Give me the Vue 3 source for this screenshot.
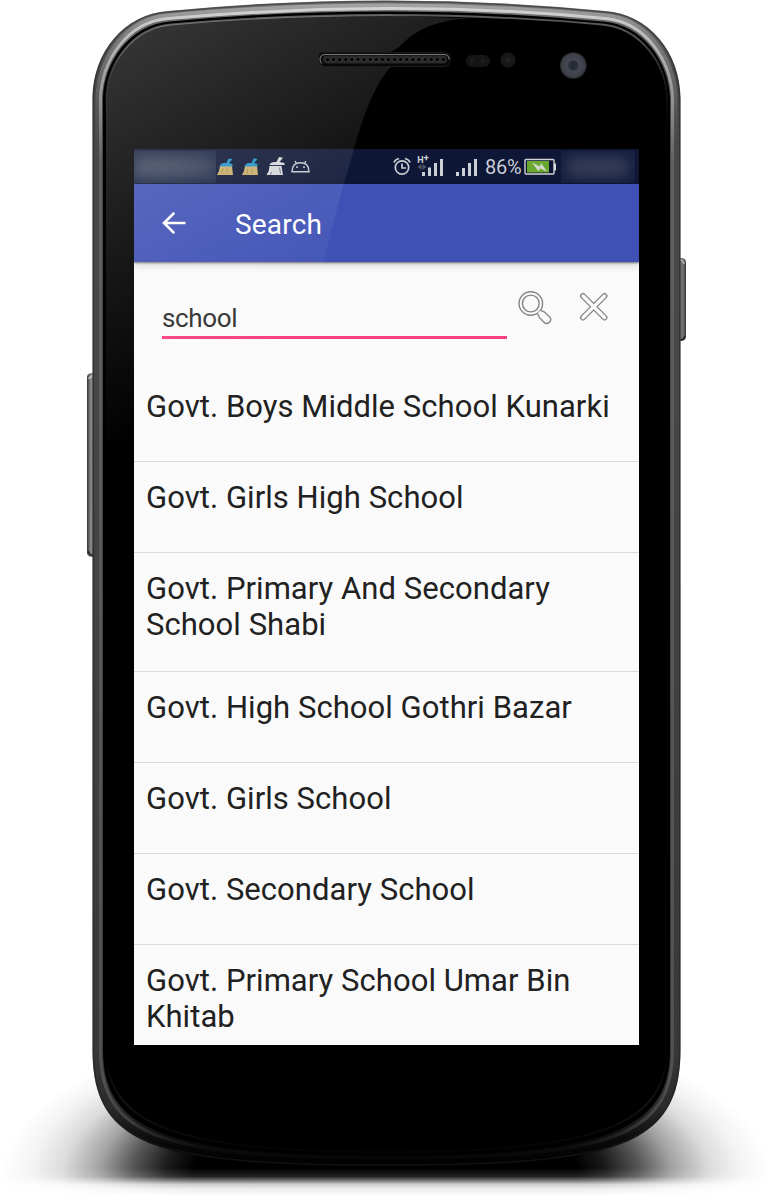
<script setup>
import { ref } from 'vue'

const query = ref('school')
const results = [
  'Govt. Boys Middle School Kunarki',
  'Govt. Girls High School',
  'Govt. Primary And Secondary School Shabi',
  'Govt. High School Gothri Bazar',
  'Govt. Girls School',
  'Govt. Secondary School',
  'Govt. Primary School Umar Bin Khitab',
]
const speakerHoles = Array.from({ length: 20 }, (_, i) => 327.5 + i * 6.1)
</script>

<template>
  <main class="stage">
    <svg class="layer" viewBox="0 0 771 1196" aria-hidden="true">
      <defs>
        <radialGradient id="shadow" gradientUnits="userSpaceOnUse" cx="0" cy="0" r="1" gradientTransform="translate(386 1176) scale(385 160)">
          <stop offset="0" stop-color="#000" />
          <stop offset=".5" stop-color="#000" />
          <stop offset=".57" stop-color="#000" stop-opacity=".9" />
          <stop offset=".66" stop-color="#000" stop-opacity=".66" />
          <stop offset=".745" stop-color="#000" stop-opacity=".36" />
          <stop offset=".84" stop-color="#000" stop-opacity=".14" />
          <stop offset=".92" stop-color="#000" stop-opacity=".045" />
          <stop offset="1" stop-color="#000" stop-opacity="0" />
        </radialGradient>
        <linearGradient id="floor" gradientUnits="userSpaceOnUse" x1="0" y1="1168" x2="0" y2="1196">
          <stop offset="0" stop-color="#fff" />
          <stop offset=".3" stop-color="#ddd" />
          <stop offset=".45" stop-color="#888" />
          <stop offset=".58" stop-color="#333" />
          <stop offset=".75" stop-color="#111" />
          <stop offset="1" stop-color="#000" />
        </linearGradient>
        <mask id="floorMask" maskUnits="userSpaceOnUse" x="0" y="1000" width="771" height="196">
          <rect y="1000" width="771" height="196" fill="url(#floor)" />
        </mask>
        <linearGradient id="rim" x1="0" y1="0" x2="0" y2="1">
          <stop offset="0" stop-color="#777" />
          <stop offset=".06" stop-color="#484848" />
          <stop offset=".3" stop-color="#484848" />
          <stop offset=".9" stop-color="#383838" />
          <stop offset=".95" stop-color="#2a2a2a" />
          <stop offset=".98" stop-color="#070808" />
          <stop offset="1" stop-color="#000" />
        </linearGradient>
        <linearGradient id="bevel" gradientUnits="userSpaceOnUse" x1="0" y1="0" x2="0" y2="150">
          <stop offset="0" stop-color="#a8a8a8" />
          <stop offset=".25" stop-color="#7c7c7c" />
          <stop offset=".6" stop-color="#606060" />
          <stop offset="1" stop-color="#555" stop-opacity="0" />
        </linearGradient>
        <linearGradient id="shine" gradientUnits="userSpaceOnUse" x1="0" y1="0" x2="0" y2="1166">
          <stop offset="0" stop-color="#d8d8d8" />
          <stop offset=".04" stop-color="#b4b4b4" />
          <stop offset=".09" stop-color="#909090" />
          <stop offset=".14" stop-color="#606060" />
          <stop offset=".93" stop-color="#505050" />
          <stop offset=".96" stop-color="#404040" />
          <stop offset=".975" stop-color="#202020" />
          <stop offset=".985" stop-color="#0b0c0c" />
          <stop offset="1" stop-color="#030303" />
        </linearGradient>
        <linearGradient id="inner" gradientUnits="userSpaceOnUse" x1="0" y1="10" x2="0" y2="1160">
          <stop offset="0" stop-color="#606060" />
          <stop offset=".025" stop-color="#4c4c4c" />
          <stop offset=".07" stop-color="#111" />
          <stop offset=".1" stop-color="#000" />
          <stop offset=".91" stop-color="#000" />
          <stop offset=".95" stop-color="#161616" />
          <stop offset=".985" stop-color="#060606" />
          <stop offset="1" stop-color="#030303" />
        </linearGradient>
        <linearGradient id="key" x1="0" y1="0" x2="1" y2="0">
          <stop offset="0" stop-color="#333" />
          <stop offset=".3" stop-color="#888" />
          <stop offset="1" stop-color="#707070" />
        </linearGradient>
        <linearGradient id="keyRight" x1="1" y1="0" x2="0" y2="0">
          <stop offset="0" stop-color="#333" />
          <stop offset=".25" stop-color="#707070" />
          <stop offset="1" stop-color="#666" />
        </linearGradient>
        <radialGradient id="lens">
          <stop offset="0" stop-color="#252b33" />
          <stop offset=".33" stop-color="#2b3038" />
          <stop offset=".42" stop-color="#454852" />
          <stop offset=".85" stop-color="#3e4049" />
          <stop offset="1" stop-color="#25262b" />
        </radialGradient>
      </defs>

      <!-- floor shadow -->
      <rect y="1000" width="771" height="196" fill="url(#shadow)" mask="url(#floorMask)" />

      <!-- side keys -->
      <rect x="87" y="373" width="12" height="184" rx="4.5" fill="url(#key)" />
      <path d="M89 379q1-3 5-3" fill="none" stroke="#bbb" stroke-width="2" />
      <path d="M88 551q1 4 6 5" fill="none" stroke="#222" stroke-width="1.5" />
      <rect x="675" y="258" width="11" height="83" rx="4.5" fill="url(#keyRight)" />
      <path d="M680 260q3 0 4 4" fill="none" stroke="#aaa" stroke-width="2" />
      <path d="M680 340q4 0 5-4" fill="none" stroke="#222" stroke-width="1.5" />

      <!-- body -->
      <path d="M92.500 98C93 52 124 14 168 11Q276 .5 386.500 .5T605 11C649 14 680 52 680.500 98V1050C680.500 1148 615 1166 386.500 1166S92.500 1148 92.500 1050Z" fill="url(#rim)" />
      <path d="M93.300 98C94 53 125 15 168 12Q276 1.500 386.500 1.500T605 12C648 15 679 53 679.700 98V1050C679.700 1147 614 1165 386.500 1165S93.300 1147 93.300 1050Z" fill="none" stroke="#222" stroke-opacity=".5" stroke-width="1.500" />
      <path d="M98.500 98C100 59 126 20 168 16.500Q276 6.500 386.500 6.500T605 16.500C647 20 673 59 674.500 98V150M98.500 98V150" fill="none" stroke="url(#bevel)" stroke-width="6" />
      <path d="M100.500 98C102 61 127 22 168 18.500Q276 9 386.500 8.500T605 18.500C646 22 671 61 672.500 98V1050C672.500 1136 612 1158 386.500 1158S100.500 1136 100.500 1050Z" fill="none" stroke="url(#shine)" stroke-width="3" />
      <path d="M103 98C104.500 62 129 25 170 21.500Q276 11.500 386.500 11.500T603 21.500C644 25 668.500 62 670 98V1050C670 1131 606 1155.500 386.500 1155.500S103 1131 103 1050Z" fill="#000" />
      <path d="M106 98C107 64 132 28 171 24.500Q276 15 386.500 15T602 24.500C641 28 666 64 667 98V1050C665 1123 604 1152 386.500 1152S108 1123 106 1050Z" fill="#000" stroke="url(#inner)" stroke-width="1.800" />

      <!-- earpiece -->
      <rect x="318.500" y="52.500" width="132" height="14" rx="6" fill="#080808" stroke="#1c1c1c" />
      <path d="M322 63.500q-2-1-2-4 0-5 6-5h118q5 0 5 5" fill="none" stroke="#777" stroke-width="1.200" />
      <rect x="323" y="55.500" width="124" height="8" rx="4" fill="#292929" />
      <circle v-for="x in speakerHoles" :key="x" :cx="x" cy="59.500" r="2.100" fill="#000" stroke="#444" stroke-width=".7" />

      <!-- proximity sensors and camera -->
      <rect x="466" y="55" width="24" height="12" rx="6" fill="#151515" />
      <circle cx="472" cy="61" r="1.800" fill="#222" />
      <circle cx="483" cy="61" r="1.800" fill="#222" />
      <circle cx="508" cy="60" r="7.500" fill="#171717" />
      <circle cx="508" cy="60" r="2.500" fill="#222" />
      <circle cx="573.300" cy="65.500" r="13.300" fill="url(#lens)" />
    </svg>

    <section class="screen">
      <div class="status">
        <span class="smudge smudge-left"><i></i></span>
        <svg class="notices" width="98" height="20" viewBox="0 0 98 20" aria-hidden="true">
          <g v-for="x in [0, 25]" :key="x" :transform="`translate(${x} 0)`">
            <path d="M3 9h12l1 9H0q2.500-4 3-9Z" fill="#c9ad69" />
            <path d="M6 11l-1 6m5-6v6" stroke="#a58a50" stroke-width=".8" />
            <path d="M2.500 9.500Q3.500 6 7 6h2.500L11.500 1.500l4 .5L12 6l3.500 1v2.500Z" fill="#2492c8" />
          </g>
          <g transform="translate(49.500 0)" fill="#d5d7dc">
            <path d="M3 9h12l1.500 9H0q3-4 3-9Z" />
            <path d="M3 8q1-3 5-3h2L12.500 0l4 .8L13 5l5 1v2Z" />
            <path d="M3 8.500h12m-2 2 1 6M5 15l-1 3" stroke="#27314d" stroke-width=".6" fill="none" />
          </g>
          <g fill="none" stroke="#c6c9d0" stroke-width="1.400">
            <path d="M75 14.700q0-9 8.500-9t8.500 9ZM78 4l1.500 2.500M89 4l-1.500 2.500" />
            <path d="M79.200 10.200h1.600m5.400 0h1.600" stroke-width="1.800" />
          </g>
        </svg>
        <svg class="signals" width="86" height="26" viewBox="0 0 86 26" aria-hidden="true">
          <g fill="none" stroke="#cbced5" stroke-width="1.700">
            <circle cx="9" cy="13.500" r="6.700" />
            <path d="M9 9.500V14h4M1 8.500q1-3 5-4m6 0q4 1 5 4" />
          </g>
          <text x="24.300" y="8.500" class="network">H<tspan dy="-1.500">+</tspan></text>
          <path d="m24.500 13 4-3v6Zm9 0-4-3v6Z" fill="#50576a" />
          <path d="M29 18h3v4h-3ZM35 13.500h3V22h-3ZM41 9h3v13h-3ZM47 5h3v17h-3ZM63 18h3v4h-3ZM69 14h3v8h-3ZM75 9h3v13h-3ZM81 5h3v17h-3Z" fill="#cdd0d6" />
        </svg>
        <span class="percent">86%</span>
        <svg class="battery" width="33" height="18" viewBox="0 0 33 18" aria-hidden="true">
          <rect x="1" y="1.500" width="29" height="14.500" rx="1" fill="#0b1533" stroke="#d2d5da" stroke-width="1.400" />
          <path d="M30 5.500h2v7h-2Z" fill="#d2d5da" />
          <path d="M3 3h22v11.500H3Z" fill="#6ba82f" />
          <path d="m8 4.500 8 4 1-3.500 6 8.500-7-3-1.500 3Z" fill="#d3d7cd" />
        </svg>
        <span class="smudge smudge-right"><i></i></span>
      </div>

      <header class="appbar">
        <svg class="back" width="24" height="22" viewBox="0 0 24 22" aria-label="Back">
          <path d="M12.300.8 2 11l10.300 10.200M2.500 11H23.500" fill="none" stroke="#fff" stroke-width="2.600" />
        </svg>
        <h1>Search</h1>
      </header>

      <form class="search" @submit.prevent>
        <label class="field"><span>{{ query }}</span></label>
        <svg class="find" width="34" height="34" viewBox="0 0 34 34" aria-label="Find">
          <g fill="none" stroke="#858585" stroke-width="1.400">
            <circle cx="12.800" cy="12.500" r="11.800" />
            <circle cx="12.800" cy="12.500" r="8.400" />
            <path d="m19.500 22.500 2 4.200 4.500 4.500c3.500 3.500 9-1.500 5.500-5.500l-5-4.700-4-1.800" fill="#fafafa" />
          </g>
        </svg>
        <svg class="clear" width="30" height="30" viewBox="0 0 30 30" aria-label="Clear">
          <path d="M4 4 25.500 25.500M25.500 4 4 25.500" stroke="#858585" stroke-width="6" stroke-linecap="round" />
          <path d="M4 4 25.500 25.500M25.500 4 4 25.500" stroke="#fafafa" stroke-width="3.300" stroke-linecap="round" />
        </svg>
      </form>

      <ul class="results">
        <li v-for="name in results" :key="name">{{ name }}</li>
      </ul>
    </section>

    <!-- glass reflection -->
    <svg class="layer" viewBox="0 0 771 1196" aria-hidden="true">
      <defs>
        <linearGradient id="glare" gradientUnits="userSpaceOnUse" x1="52" y1="91" x2="225" y2="392">
          <stop offset="0" stop-color="#fff" stop-opacity=".2" />
          <stop offset=".56" stop-color="#fff" stop-opacity=".085" />
          <stop offset="1" stop-color="#fff" stop-opacity="0" />
        </linearGradient>
      </defs>
      <path d="M106 98C107 64 132 28 171 24.500Q276 15 386.500 15.500L470 18.500C430 20 412 34 400 46Q396 50 390 52H322Q318 53 318 59T324 67H391C375 82 362 120 354 149Q335 213 322 270L260 480H106Z" fill="url(#glare)" />
    </svg>
  </main>
</template>

<style>
body {
  background: #fff;
}
</style>

<style scoped>
.stage {
  position: relative;
  width: 771px;
  height: 1196px;
  box-sizing: border-box;
  padding: 149px 132px 151px 134px;
  overflow: hidden;
  font-family: Roboto, "Noto Sans", sans-serif;
}
.layer {
  position: absolute;
  inset: 0;
  width: 771px;
  height: 1196px;
  pointer-events: none;
}
.screen {
  position: relative;
  display: flex;
  flex-direction: column;
  width: 505px;
  height: 896px;
  overflow: hidden;
  background: #fafafa;
}
.status {
  display: flex;
  align-items: center;
  height: 35px;
  flex: none;
  background: #0e1736;
  color: #c9ccd4;
}
.smudge {
  display: block;
  height: 32px;
  overflow: hidden;
}
.smudge i {
  display: block;
  height: 20px;
  margin-top: 6px;
  border-radius: 8px;
  filter: blur(6px);
}
.smudge-left {
  width: 82px;
  background: #192443;
}
.smudge-left i {
  background: linear-gradient(90deg, #3f485f 50%, #303954);
}
.smudge-right {
  width: 74px;
  margin-left: 4px;
  background: #162041;
}
.smudge-right i {
  margin: 6px 6px 0;
  background: #343b54;
}
.notices {
  margin: 1px 0 0 1px;
}
.signals {
  margin-left: 78px;
}
.network {
  font: bold 9px Roboto, sans-serif;
  fill: #d2d5da;
}
.percent {
  width: 37px;
  margin: 1px 0 0 6px;
  font-size: 20px;
  letter-spacing: -.3px;
  line-height: 24px;
  white-space: nowrap;
}
.battery {
  margin-left: 2px;
}
.appbar {
  position: relative;
  display: flex;
  align-items: center;
  height: 78px;
  flex: none;
  padding-left: 28px;
  background: #3f51b5;
  box-shadow: 0 1px 2px rgba(0, 0, 0, .5), 0 3px 8px rgba(0, 0, 0, .16);
}
.appbar h1 {
  margin: 3px 0 0 49px;
  color: #fff;
  font-size: 28px;
  font-weight: 400;
  letter-spacing: .2px;
  line-height: 34px;
}
.search {
  display: flex;
  height: 109px;
  flex: none;
  box-sizing: border-box;
  padding: 28px 30px 0 28px;
}
.field {
  width: 345px;
  height: 46px;
  flex: none;
  border-bottom: 3px solid #ff4081;
  color: #303030;
  font-size: 26px;
  letter-spacing: -.35px;
  line-height: 56px;
}
.find {
  margin: 1px 0 0 11px;
}
.clear {
  margin: 2px 0 0 27px;
}
.results {
  margin: 0;
  padding: 0;
  list-style: none;
}
.results li {
  box-sizing: border-box;
  min-height: 91px;
  padding: 18px 20px 28px 12px;
  border-bottom: 1px solid #dadada;
  color: #212121;
  font-size: 31px;
  letter-spacing: .05px;
  line-height: 36px;
}
</style>
